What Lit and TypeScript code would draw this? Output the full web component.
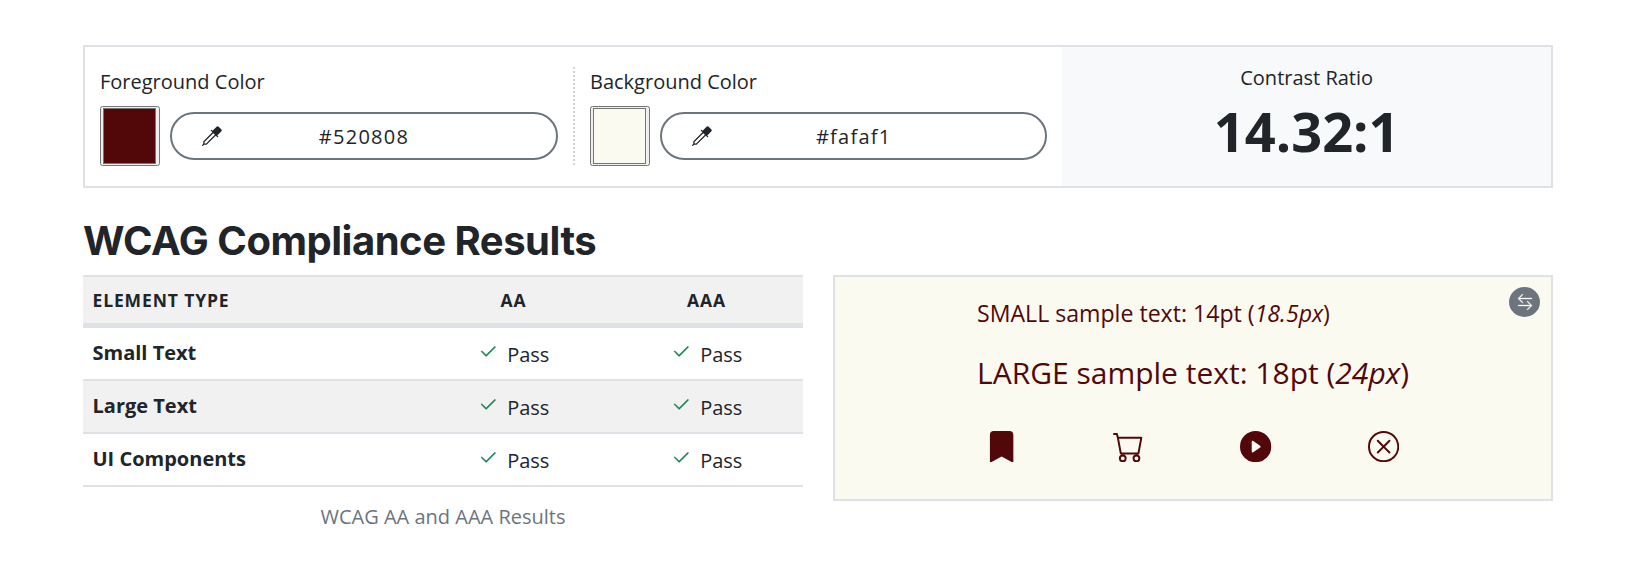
import { LitElement, html, css, svg } from "lit";
import { customElement, property } from "lit/decorators.js";

const icons: Record<string, string[]> = {
  eyedropper: [
    "M13.354.646a1.207 1.207 0 0 0-1.708 0L8.5 3.793l-.646-.647a.5.5 0 1 0-.708.708L8.293 5l-7.147 7.146A.5.5 0 0 0 1 12.5v1.793l-.854.853a.5.5 0 1 0 .708.707L1.707 15H3.5a.5.5 0 0 0 .354-.146L11 7.707l1.146 1.147a.5.5 0 0 0 .708-.708l-.647-.646 3.147-3.146a1.207 1.207 0 0 0 0-1.708zM2 12.707l7-7L10.293 7l-7 7H2z",
  ],
  check: [
    "M13.854 3.646a.5.5 0 0 1 0 .708l-7 7a.5.5 0 0 1-.708 0l-3.5-3.5a.5.5 0 1 1 .708-.708L6.5 10.293l6.646-6.647a.5.5 0 0 1 .708 0z",
  ],
  bookmark: [
    "M2 2v13.5a.5.5 0 0 0 .74.439L8 13.069l5.26 2.87A.5.5 0 0 0 14 15.5V2a2 2 0 0 0-2-2H4a2 2 0 0 0-2 2z",
  ],
  cart: [
    "M0 1.5A.5.5 0 0 1 .5 1H2a.5.5 0 0 1 .485.379L2.89 3H14.5a.5.5 0 0 1 .491.592l-1.5 8A.5.5 0 0 1 13 12H4a.5.5 0 0 1-.491-.408L2.01 3.607 1.61 2H.5a.5.5 0 0 1-.5-.5M3.102 4l1.313 7h8.17l1.313-7zM5 12a2 2 0 1 0 0 4 2 2 0 0 0 0-4m7 0a2 2 0 1 0 0 4 2 2 0 0 0 0-4m-7 1a1 1 0 1 1 0 2 1 1 0 0 1 0-2m7 0a1 1 0 1 1 0 2 1 1 0 0 1 0-2",
  ],
  play: [
    "M16 8A8 8 0 1 1 0 8a8 8 0 0 1 16 0M6.79 5.093A.5.5 0 0 0 6 5.5v5a.5.5 0 0 0 .79.407l3.5-2.5a.5.5 0 0 0 0-.814z",
  ],
  close: [
    "M8 15A7 7 0 1 1 8 1a7 7 0 0 1 0 14m0 1A8 8 0 1 0 8 0a8 8 0 0 0 0 16",
    "M4.646 4.646a.5.5 0 0 1 .708 0L8 7.293l2.646-2.647a.5.5 0 0 1 .708.708L8.707 8l2.647 2.646a.5.5 0 0 1-.708.708L8 8.707l-2.646 2.647a.5.5 0 0 1-.708-.708L7.293 8 4.646 5.354a.5.5 0 0 1 0-.708",
  ],
  swap: [
    "M1 11.5a.5.5 0 0 0 .5.5h11.793l-3.147 3.146a.5.5 0 0 0 .708.708l4-4a.5.5 0 0 0 0-.708l-4-4a.5.5 0 0 0-.708.708L13.293 11H1.5a.5.5 0 0 0-.5.5m14-7a.5.5 0 0 1-.5.5H2.707l3.147 3.146a.5.5 0 1 1-.708.708l-4-4a.5.5 0 0 1 0-.708l4-4a.5.5 0 1 1 .708.708L2.707 4H14.5a.5.5 0 0 1 .5.5",
  ],
};

@customElement("ui-icon")
class UiIcon extends LitElement {
  @property() name = "";
  static styles = css`
    :host { display: block; width: 20px; height: 20px; }
    .glyph {
      display: block; width: 100%; height: 100%; fill: currentColor;
      stroke: currentColor; stroke-width: var(--icon-stroke, 0);
    }
  `;
  render() {
    return html`<svg class="glyph" viewBox="0 0 16 16">
      ${(icons[this.name] ?? []).map((d) => svg`<path fill-rule="evenodd" d=${d}></path>`)}
    </svg>`;
  }
}

@customElement("color-field")
class ColorField extends LitElement {
  @property() label = "";
  @property() value = "";
  static styles = css`
    :host { display: block; padding: 0 15px; color: #212529; }
    .label { font-size: 20px; line-height: 30px; margin-bottom: 9px; }
    .row { display: flex; align-items: center; gap: 10px; }
    .well {
      box-sizing: border-box; flex: none; width: 60px; height: 60px;
      padding: 1px 3px 1px 2px; border: 1px solid #767676; border-radius: 2.5px; background: #efefef;
    }
    .swatch { box-sizing: border-box; width: 100%; height: 100%; border: 1px solid #767676; }
    .pill {
      box-sizing: border-box; flex: 1; height: 48px; display: grid;
      grid-template-columns: 20px 1fr 20px; align-items: center;
      border: 2px solid #6c757d; border-radius: 24px; padding: 0 30px;
    }
    .value { font-size: 20px; line-height: 30px; letter-spacing: 1.25px; text-align: center; padding-top: 2px; }
  `;
  render() {
    return html`
      <div class="label">${this.label}</div>
      <div class="row">
        <div class="well"><div class="swatch" style="background:${this.value}"></div></div>
        <div class="pill">
          <ui-icon name="eyedropper"></ui-icon>
          <span class="value">${this.value}</span>
        </div>
      </div>
    `;
  }
}

@customElement("app-root")
class AppRoot extends LitElement {
  static styles = css`
    :host {
      display: block; box-sizing: border-box; height: 564px; padding: 45px 82px 0 83px;
      background: #fff; color: #212529;
      font: 400 20px/30px "Open Sans", sans-serif;
    }
    .controls {
      box-sizing: border-box; height: 143px; display: grid;
      grid-template-columns: repeat(3, 1fr); border: 2px solid #dee2e6;
    }
    .field { margin: 20px 0; }
    .fore { position: relative; padding-right: 15.67px; }
    .back { padding-left: 16.33px; }
    .fore::after {
      content: ""; position: absolute; top: 0; right: -1.33px; width: 2px; height: 99px;
      background: repeating-linear-gradient(#ced4da 0 2px, transparent 2px 4px);
    }
    .ratio { background: #f8f9fa; text-align: center; padding-top: 16px; }
    .ratio-value { font-size: 54.2px; line-height: 66px; font-weight: 700; margin-top: 5px; }
    .title {
      margin: 29px 0 10px; font: 700 40px/48px Inter, sans-serif; letter-spacing: -0.48px;
    }
    .results { display: grid; grid-template-columns: 720px 720px; gap: 30px; align-items: start; }
    .table { border-top: 2px solid #dee2e6; }
    .row { display: grid; grid-template-columns: 1fr 193px 193px; height: 51px; align-items: center; border-bottom: 2px solid #dee2e6; }
    .head { height: 46px; background: #f1f1f1; border-bottom-width: 5px; font-size: 17.5px; font-weight: 700; letter-spacing: 0.875px; }
    .striped { background: #f1f1f1; }
    .name { padding: 0 0 2px 9.5px; font-weight: 700; }
    .head .name { padding-bottom: 0; }
    .center { text-align: center; }
    .status { display: flex; justify-content: center; gap: 9.5px; padding-top: 1px; }
    .tick { color: #198754; margin-top: 4px; --icon-stroke: 0.3; }
    .pass { padding-top: 2px; }
    .caption { text-align: center; color: #6c757d; margin-top: 15px; }
    .sample {
      box-sizing: border-box; position: relative; height: 226px; padding: 21px 0 0 142px;
      border: 2px solid #dee2e6; background: #fafaf1; color: #520808;
    }
    .small { font-size: 23.125px; line-height: 30px; }
    .large { font-size: 30px; line-height: 45px; margin-top: 22px; }
    .shapes { display: grid; grid-template-columns: repeat(4, 127.2px); margin-top: 36px; padding-left: 9px; }
    .shape { width: 31.25px; height: 31.25px; }
    .swap {
      position: absolute; top: 10px; right: 11px; width: 31px; height: 30px; border-radius: 50%;
      background: #6c757d; color: #fff; display: grid; place-items: center;
    }
    .swap-icon { width: 16px; height: 16px; --icon-stroke: 0.3; }
  `;

  private rows = ["Small Text", "Large Text", "UI Components"];
  private shapes = ["bookmark", "cart", "play", "close"];

  private status() {
    return html`<div class="status">
      <ui-icon class="tick" name="check"></ui-icon><span class="pass">Pass</span>
    </div>`;
  }

  render() {
    return html`
      <section class="controls">
        <color-field class="field fore" label="Foreground Color" value="#520808"></color-field>
        <color-field class="field back" label="Background Color" value="#fafaf1"></color-field>
        <div class="ratio">
          <div>Contrast Ratio</div>
          <div class="ratio-value">14.32:1</div>
        </div>
      </section>
      <h2 class="title">WCAG Compliance Results</h2>
      <section class="results">
        <div>
          <div class="table">
            <div class="row head">
              <div class="name">ELEMENT TYPE</div>
              <div class="center">AA</div>
              <div class="center">AAA</div>
            </div>
            ${this.rows.map(
              (name, i) => html`<div class="row ${i % 2 ? "striped" : ""}">
                <div class="name">${name}</div>
                ${this.status()}${this.status()}
              </div>`
            )}
          </div>
          <div class="caption">WCAG AA and AAA Results</div>
        </div>
        <div class="sample">
          <div class="small">SMALL sample text: 14pt (<em>18.5px</em>)</div>
          <div class="large">LARGE sample text: 18pt (<em>24px</em>)</div>
          <div class="shapes">
            ${this.shapes.map((s) => html`<ui-icon class="shape" name=${s}></ui-icon>`)}
          </div>
          <div class="swap"><ui-icon class="swap-icon" name="swap"></ui-icon></div>
        </div>
      </section>
    `;
  }
}
